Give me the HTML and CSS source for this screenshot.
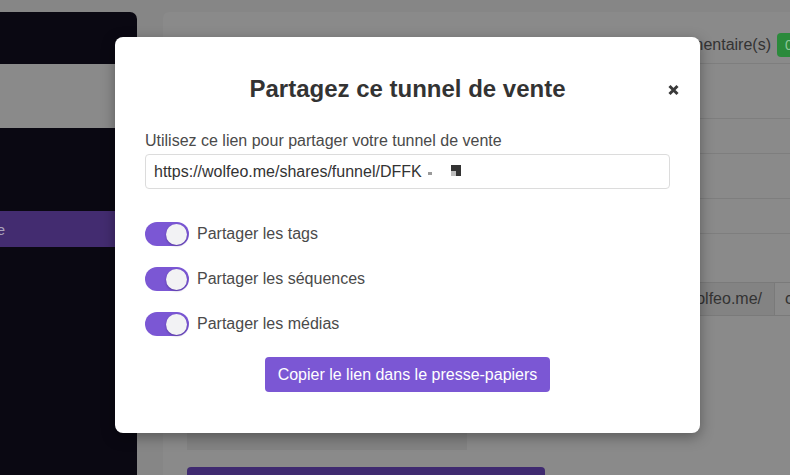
FILE: index.html
```html
<!DOCTYPE html>
<html lang="fr">
<head>
<meta charset="utf-8">
<title>Partagez ce tunnel de vente</title>
<link rel="stylesheet" href="styles.css">
</head>
<body>
<div class="app">
  <aside class="sidebar">
    <div class="sb-top"></div>
    <div class="sb-logo"></div>
    <nav class="sb-nav">
      <div class="sb-item"><span class="sb-text">Tunnel de vente</span></div>
    </nav>
  </aside>
  <main class="main">
    <section class="card">
      <header class="card-head">
        <span class="head-text">Commentaire(s)</span>
        <span class="badge">0</span>
      </header>
      <div class="row row-a"></div>
      <div class="row row-b"></div>
      <div class="row row-c"></div>
      <div class="row row-b"></div>
      <div class="url-row">
        <span class="url-label">URL de la page</span>
        <span class="addon">https://wolfeo.me/</span>
        <span class="field">chemin</span>
      </div>
      <div class="preview"></div>
      <button class="edit-btn">Editer la Page</button>
    </section>
  </main>
</div>

<div class="modal">
  <button class="close" aria-label="Fermer">
    <svg width="11" height="12" viewBox="0 0 11 12"><path d="M1.5 2 L9.5 10 M9.5 2 L1.5 10" stroke="#3a3a3a" stroke-width="3" fill="none"/></svg>
  </button>
  <h2 class="modal-title">Partagez ce tunnel de vente</h2>
  <label class="field-label">Utilisez ce lien pour partager votre tunnel de vente</label>
  <div class="link-input">
    <span class="link-text">https://wolfeo.me/shares/funnel/DFFK</span><span class="px px-a"></span><span class="px-b"><span class="pb1"></span><span class="pb2"></span><span class="pb3"></span><span class="pb4"></span></span>
  </div>
  <div class="options">
    <div class="option"><span class="switch"><span class="knob"></span></span><span class="opt-label">Partager les tags</span></div>
    <div class="option"><span class="switch"><span class="knob"></span></span><span class="opt-label">Partager les séquences</span></div>
    <div class="option"><span class="switch"><span class="knob"></span></span><span class="opt-label">Partager les médias</span></div>
  </div>
  <div class="actions">
    <button class="copy-btn">Copier le lien dans le presse-papiers</button>
  </div>
</div>
</body>
</html>
```
FILE: styles.css
```css
* { box-sizing: border-box; }
html, body {
  margin: 0;
  padding: 0;
  width: 790px;
  height: 475px;
  overflow: hidden;
  background: #868686;
  font-family: "Liberation Sans", Arial, sans-serif;
}
.app {
  display: flex;
  padding-top: 12px;
  height: 475px;
}
.sidebar {
  width: 137px;
  flex: 0 0 137px;
  height: 463px;
  background: #0a0812;
  border-top-right-radius: 7px;
  overflow: hidden;
}
.sb-top { height: 52px; }
.sb-logo { height: 64px; background: #8a8a8a; }
.sb-nav { padding-top: 83px; }
.sb-item {
  height: 36px;
  background: #432c70;
  display: flex;
  align-items: center;
  overflow: hidden;
}
.sb-text {
  display: inline-block;
  flex: 0 0 140px;
  width: 140px;
  margin-left: -135px;
  text-align: right;
  white-space: nowrap;
  color: #a9a2bb;
  font-size: 15px;
}
.main {
  margin-left: 26px;
  flex: 0 0 auto;
}
.card {
  width: 680px;
  height: 463px;
  background: #8a8a8a;
  border-radius: 6px 6px 0 0;
  overflow: hidden;
}
.card-head {
  height: 52px;
  padding-top: 14px;
  padding-right: 40px;
  border-bottom: 1px solid #7e7e7e;
  display: flex;
  align-items: center;
  justify-content: flex-end;
  gap: 6px;
}
.head-text { color: #333; font-size: 16px; }
.badge {
  width: 26px;
  height: 24px;
  background: #2b8a3b;
  border-radius: 4px;
  color: #8fc79a;
  font-size: 14px;
  display: flex;
  align-items: center;
  padding-left: 8px;
}
.row { border-bottom: 1px solid #7e7e7e; }
.row-a { height: 55px; }
.row-b { height: 35px; }
.row-c { height: 45px; }
.url-row {
  margin-top: 48px;
  margin-left: 24px;
  height: 34px;
  display: flex;
}
.url-label { flex: 1; color: #333; font-size: 16px; line-height: 34px; }
.addon {
  background: #838383;
  border: 1px solid #7a7a7a;
  border-right: none;
  padding: 0 12px;
  color: #333;
  font-size: 16px;
  line-height: 32px;
}
.field {
  width: 69px;
  border: 1px solid #7a7a7a;
  border-right: none;
  padding-left: 10px;
  color: #333;
  font-size: 16px;
  line-height: 32px;
}
.preview {
  margin: 20px 0 0 24px;
  width: 280px;
  height: 114px;
  background: #838383;
}
.edit-btn {
  display: block;
  margin: 17px 0 0 24px;
  width: 358px;
  height: 38px;
  border: none;
  border-radius: 4px;
  background: #3f2a70;
  color: #8f87a6;
  font-family: inherit;
  font-size: 16px;
  padding: 6px 0 0;
  text-align: center;
  line-height: 20px;
}

/* Modal */
.modal {
  position: absolute;
  left: 115px;
  top: 37px;
  width: 585px;
  background: #fff;
  border-radius: 8px;
  box-shadow: 0 4px 14px rgba(0, 0, 0, 0.35);
  padding: 38px 30px 41px;
}
.close {
  position: absolute;
  left: 553px;
  top: 47px;
  width: 11px;
  height: 12px;
  padding: 0;
  border: none;
  background: none;
  display: flex;
}
.modal-title {
  margin: 0 0 28px;
  text-align: center;
  font-size: 24px;
  line-height: 28px;
  font-weight: bold;
  color: #333;
}
.field-label {
  display: block;
  font-size: 16px;
  line-height: 20px;
  color: #4a4a4a;
  margin-bottom: 3px;
}
.link-input {
  height: 35px;
  border: 1px solid #dcdcdc;
  border-radius: 4px;
  padding: 0 8px;
  display: flex;
  align-items: center;
  color: #333;
  font-size: 16px;
}
.link-text { line-height: 20px; }
.px { display: inline-block; }
.px-a {
  width: 4px;
  height: 3px;
  background: #9a9a9a;
  margin: 4px 0 0 6px;
}
.px-b {
  display: grid;
  grid-template-columns: 5px 5px;
  grid-template-rows: 6px 5px;
  margin: -2px 0 0 19px;
}
.pb1 { background: #333; }
.pb2 { background: #333; }
.pb3 { background: #bdbdbd; }
.pb4 { background: #333; }
.options {
  margin-top: 33px;
  display: flex;
  flex-direction: column;
  gap: 21px;
}
.option {
  display: flex;
  align-items: center;
  height: 24px;
}
.switch {
  width: 44px;
  height: 24px;
  border-radius: 12px;
  background: #7b57d4;
  display: flex;
  align-items: center;
  justify-content: flex-end;
  padding-right: 2px;
}
.knob {
  width: 21px;
  height: 21px;
  border-radius: 50%;
  background: #f2f2f4;
  box-shadow: 0 1px 2px rgba(40, 20, 90, 0.45);
}
.opt-label {
  margin-left: 8px;
  font-size: 16px;
  color: #4a4a4a;
}
.actions {
  margin-top: 21px;
  display: flex;
  justify-content: center;
}
.copy-btn {
  height: 35px;
  padding: 0 13px;
  border: none;
  border-radius: 4px;
  background: #7b57d4;
  color: #fff;
  font-family: inherit;
  font-size: 16px;
}
```
